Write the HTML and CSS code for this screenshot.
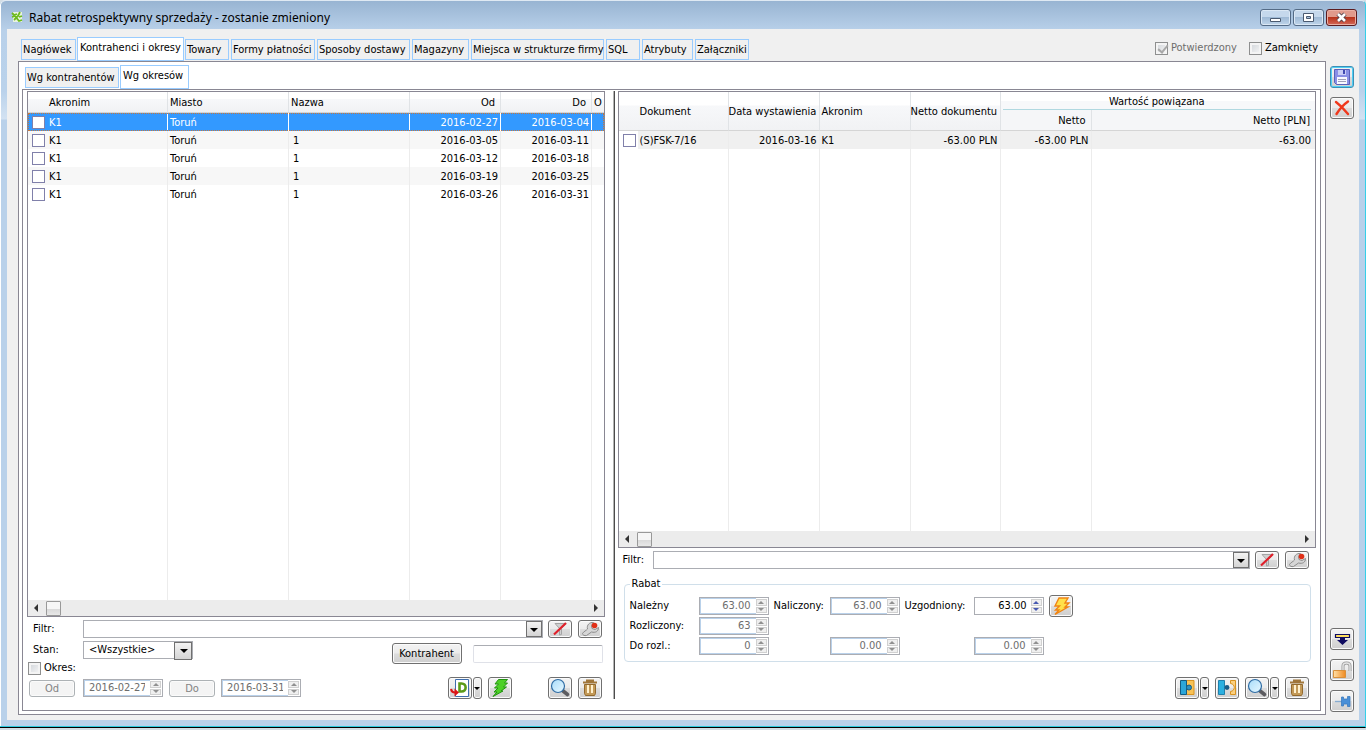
FILE: index.html
```
<!DOCTYPE html>
<html lang="pl">
<head>
<meta charset="utf-8">
<title>Rabat retrospektywny sprzedaży</title>
<link rel="stylesheet" href="styles.css">
</head>
<body>
<svg class="defs" aria-hidden="true">
  <defs>
    <linearGradient id="glass" x1="0" y1="0" x2="1" y2="1"><stop offset="0" stop-color="#a8dcfa"/><stop offset="1" stop-color="#e8f8ff"/></linearGradient>
    <linearGradient id="orange" x1="0" y1="0" x2="1" y2="0"><stop offset="0" stop-color="#ffe0a8"/><stop offset="1" stop-color="#f08a20"/></linearGradient>
    <symbol id="i-filter" viewBox="0 0 22 16"><path d="M6 2.500h11l-4.500 5v6l-2 .5V7.500z" fill="#d0d0d0" stroke="#a4a4a4"/><path d="M5 13.500L17 2" stroke="#e0202a" stroke-width="2.200"/></symbol>
    <symbol id="i-wrench" viewBox="0 0 22 16"><path d="M3.500 12.500c1-2 4-3 5-4.500-1-4 2-7 6-6.500l-2 3 .5 3 3 1 3.500-2c0 4-3 5.500-7 4.500l-5 3.500c-2 .5-4-.5-4-2z" fill="#d6d6d6" stroke="#8c8c8c"/><circle cx="15.500" cy="4.500" r="2.800" fill="#e03018"/></symbol>
    <symbol id="i-lens" viewBox="0 0 22 20"><path d="M13.500 12.500l5 4" stroke="#5c5c60" stroke-width="3.600" stroke-linecap="round"/><circle cx="9" cy="8" r="6.500" fill="url(#glass)" stroke="#2f6ca4" stroke-width="1.200"/></symbol>
    <symbol id="i-trash" viewBox="0 0 22 20"><path d="M5.500 6.500h11v9l-1 2h-9l-1-2z" fill="#c39a58" stroke="#93692c"/><path d="M4 4.500h14M7 2.500h8" stroke="#a0763a" stroke-width="2"/><path d="M9 7v8M13 7v8" stroke="#fff1cf" stroke-width="2"/></symbol>
    <symbol id="i-doc" viewBox="0 0 22 20"><path d="M6.500 1.500h13v17h-13z" fill="#fff" stroke="#3f6eae"/><path d="M10.500 5.500h2c5.500 0 5.500 8 0 8h-2z" fill="none" stroke="#5a9a18" stroke-width="2.600"/><path d="M2 11c.5 3 2 3.500 4 3.500" fill="none" stroke="#dc1414" stroke-width="2"/><path d="M5.500 10.500l4.500 4-4.500 4z" fill="#dc1414"/></symbol>
    <symbol id="i-green" viewBox="0 0 22 20"><path d="M9.500 1.500h9l-3 3.500h3l-4 4h3L12 13h2L4 18.500 8 14H5l4-4H5.500l4-4H6z" fill="#4cd026" stroke="#229310"/></symbol>
    <symbol id="i-bolt" viewBox="0 0 22 20"><path d="M9 2h9l-3 5h4l-4 4h3L5 18.500 9 14H5.500l4-4H5z" fill="#ffe04a" stroke="#f08414" stroke-width="1.400"/></symbol>
    <symbol id="i-joined" viewBox="0 0 22 20"><path d="M10 2.500h8v14h-8z" fill="#f8c255" stroke="#d89320"/><path d="M4.500 2.500h6v14h-6z" fill="#2ca6d8" stroke="#145c82"/><circle cx="13" cy="9.500" r="2.500" fill="#2c90c0" stroke="#145c82"/></symbol>
    <symbol id="i-apart" viewBox="0 0 22 20"><path d="M2.500 2.500h6v14h-6z" fill="#2cb0e0" stroke="#2080ac"/><circle cx="11" cy="9.500" r="2.400" fill="#185c88"/><path d="M14.500 2.500h5v14h-5v-3c5-.5 5-7.500 0-8z" fill="#fbd080" stroke="#d89320"/></symbol>
    <symbol id="i-save" viewBox="0 0 22 20"><path d="M3.500 2.500h15v15H5.500l-2-2z" fill="#8a8fe6" stroke="#5a60b8"/><path d="M7 3h8v5H7z" fill="#c8ccf6"/><path d="M12 3h2v4h-2z" fill="#4048b0"/><path d="M6 10h10v7H6z" fill="#f8f8ff"/><path d="M7 12.500h8M7 14.500h8" stroke="#a0a0b8"/></symbol>
    <symbol id="i-cross" viewBox="0 0 22 20"><path d="M5 4c4 3 8 7 12 12M17 3.500C12 7 8 12 5.500 16" fill="none" stroke="#f0381c" stroke-width="2.400" stroke-linecap="round"/></symbol>
    <symbol id="i-down" viewBox="0 0 22 20"><path d="M4.500 5.500h14v3h-14z" fill="#ffdf60" stroke="#100c60" stroke-width="1.200"/><path d="M9 8h5v3h3l-5.500 5L6 11h3z" fill="#100c60"/></symbol>
    <symbol id="i-lock" viewBox="0 0 22 20"><path d="M12 10V6c0-4 7-4 7 0v5" fill="none" stroke="#9a9a9a" stroke-width="3"/><path d="M12 10V6c0-4 7-4 7 0v5" fill="none" stroke="#e4e4e4" stroke-width="1.400"/><path d="M2.500 10.500h12v7h-12z" fill="url(#orange)" stroke="#d8903c"/></symbol>
    <symbol id="i-pin" viewBox="0 0 22 20"><path d="M4 10.500h7" stroke="#88acd0" stroke-width="1.400"/><path d="M10.500 6h2v2h4V5.500h2.500v10h-2.500V13h-4v2h-2z" fill="#4a90d8" stroke="#3c7cc0" stroke-width=".8"/></symbol>
  </defs>
</svg>
<div class="window">
  <header class="titlebar">
    <svg class="app-icon" viewBox="0 0 12 12"><path d="M2 1h9v10H2z" fill="#e8f2e0"/><path d="M1 2l2 2 3-1M4 5l4 5 3-1M9 1L7 5 3 9M1 6l3-1M8 6l3-1" stroke="#6cba1c" stroke-width="1.800" fill="none"/></svg>
    <h1>Rabat retrospektywny sprzedaży - zostanie zmieniony</h1>
    <div class="winctl">
      <button aria-label="Minimalizuj"><svg viewBox="0 0 29 15"><path d="M9.500 8.500h10v3h-10z" fill="#fff" stroke="#4a5a70"/></svg></button>
      <button aria-label="Przywróć"><svg viewBox="0 0 29 15"><path d="M9.500 3.500h10v8h-10z" fill="#fff" stroke="#4a5a70"/><path d="M12.500 6.500h4v2h-4z" fill="#a8c0dc" stroke="#4a5a70"/></svg></button>
      <button class="close" aria-label="Zamknij"><svg viewBox="0 0 29 15"><path d="M11 4l7 7M18 4l-7 7" stroke="#51404a" stroke-width="4.400"/><path d="M11 4l7 7M18 4l-7 7" stroke="#fff" stroke-width="2.600"/></svg></button>
    </div>
  </header>
  <div class="client">
    <main class="main">
      <div class="top">
        <nav class="tabs">
          <button class="t55">Nagłówek</button><button class="t107 active">Kontrahenci i okresy</button><button class="t44">Towary</button><button class="t84">Formy płatności</button><button class="t93">Sposoby dostawy</button><button class="t57">Magazyny</button><button class="t133">Miejsca w strukturze firmy</button><button class="t34">SQL</button><button class="t51">Atrybuty</button><button class="t54">Załączniki</button>
        </nav>
        <div class="flags">
          <label class="check off"><input type="checkbox" checked disabled>Potwierdzony</label>
          <label class="check"><input type="checkbox">Zamknięty</label>
        </div>
      </div>
      <div class="pane">
        <nav class="tabs sub"><button class="t94">Wg kontrahentów</button><button class="t69 active">Wg okresów</button></nav>
        <div class="split">
          <section class="left">
            <div class="grid">
              <table class="list periods">
                <colgroup><col class="c140"><col class="c121"><col class="c121"><col class="c91"><col class="c91"><col></colgroup>
                <thead><tr><th class="first">Akronim</th><th>Miasto</th><th>Nazwa</th><th class="r">Od</th><th class="r">Do</th><th>O</th></tr></thead>
                <tbody>
                  <tr class="selected"><td><label><input type="checkbox">K1</label></td><td>Toruń</td><td></td><td class="r">2016-02-27</td><td class="r">2016-03-04</td><td></td></tr>
                  <tr class="alt"><td><label><input type="checkbox">K1</label></td><td>Toruń</td><td>1</td><td class="r">2016-03-05</td><td class="r">2016-03-11</td><td></td></tr>
                  <tr><td><label><input type="checkbox">K1</label></td><td>Toruń</td><td>1</td><td class="r">2016-03-12</td><td class="r">2016-03-18</td><td></td></tr>
                  <tr class="alt"><td><label><input type="checkbox">K1</label></td><td>Toruń</td><td>1</td><td class="r">2016-03-19</td><td class="r">2016-03-25</td><td></td></tr>
                  <tr><td><label><input type="checkbox">K1</label></td><td>Toruń</td><td>1</td><td class="r">2016-03-26</td><td class="r">2016-03-31</td><td></td></tr>
                  <tr class="filler" aria-hidden="true"><td></td><td></td><td></td><td></td><td></td><td></td></tr>
                </tbody>
              </table>
              <div class="scroll"><i class="arrow l"></i><i class="thumb"></i><i class="arrow rt"></i></div>
            </div>
            <div class="filter">
              <label for="f1">Filtr:</label>
              <div class="combo"><input id="f1" type="text"><button aria-label="Rozwiń"></button></div>
              <button class="btn small" aria-label="Wyczyść filtr"><svg><use href="#i-filter"/></svg></button>
              <button class="btn small" aria-label="Konstruuj filtr"><svg><use href="#i-wrench"/></svg></button>
            </div>
            <div class="state">
              <div class="state-left">
                <div class="field"><label for="stan">Stan:</label><span class="select"><select id="stan"><option>&lt;Wszystkie&gt;</option></select></span></div>
                <label class="check"><input type="checkbox">Okres:</label>
              </div>
              <div class="party"><button class="btn text">Kontrahent</button><input type="text" aria-label="Kontrahent"></div>
            </div>
            <div class="actions">
              <div class="dates">
                <button class="btn flat" disabled>Od</button>
                <span class="spin date off"><input type="text" value="2016-02-27" aria-label="Data od" disabled><span class="ud"><button disabled aria-label="Więcej"></button><button disabled aria-label="Mniej"></button></span></span>
                <button class="btn flat" disabled>Do</button>
                <span class="spin date off"><input type="text" value="2016-03-31" aria-label="Data do" disabled><span class="ud"><button disabled aria-label="Więcej"></button><button disabled aria-label="Mniej"></button></span></span>
              </div>
              <div class="tools">
                <span class="duo"><button class="btn" aria-label="Dokument"><svg><use href="#i-doc"/></svg></button><button class="btn drop" aria-label="Opcje dokumentu"></button></span>
                <button class="btn" aria-label="Przelicz"><svg><use href="#i-green"/></svg></button>
                <button class="btn apart" aria-label="Podgląd"><svg><use href="#i-lens"/></svg></button>
                <button class="btn" aria-label="Usuń"><svg><use href="#i-trash"/></svg></button>
              </div>
            </div>
          </section>
          <div class="splitter"></div>
          <section class="right">
            <div class="grid">
              <table class="list docs">
                <colgroup><col class="c19"><col class="c91"><col class="c91"><col class="c91"><col class="c90"><col class="c91"><col></colgroup>
                <thead>
                  <tr><th rowspan="2" class="nb"></th><th rowspan="2">Dokument</th><th rowspan="2" class="tight">Data wystawienia</th><th rowspan="2">Akronim</th><th rowspan="2" class="tight">Netto dokumentu</th><th colspan="2" class="group"><span>Wartość powiązana</span></th></tr>
                  <tr><th class="r">Netto</th><th class="r">Netto [PLN]</th></tr>
                </thead>
                <tbody>
                  <tr class="current"><td class="nb mark"><input type="checkbox" aria-label="(S)FSK-7/16"></td><td>(S)FSK-7/16</td><td class="r">2016-03-16</td><td>K1</td><td class="r">-63.00 PLN</td><td class="r">-63.00 PLN</td><td class="r wide">-63.00</td></tr>
                  <tr class="filler" aria-hidden="true"><td class="nb"></td><td></td><td></td><td></td><td></td><td></td><td></td></tr>
                </tbody>
              </table>
              <div class="scroll"><i class="arrow l"></i><i class="thumb"></i><i class="arrow rt"></i></div>
            </div>
            <div class="filter">
              <label for="f2">Filtr:</label>
              <div class="combo"><input id="f2" type="text"><button aria-label="Rozwiń"></button></div>
              <button class="btn small" aria-label="Wyczyść filtr"><svg><use href="#i-filter"/></svg></button>
              <button class="btn small" aria-label="Konstruuj filtr"><svg><use href="#i-wrench"/></svg></button>
            </div>
            <fieldset class="rebate">
              <legend>Rabat</legend>
              <div class="sums">
                <label for="r1">Należny</label><span class="spin off"><input id="r1" value="63.00" disabled><span class="ud"><button disabled aria-label="Więcej"></button><button disabled aria-label="Mniej"></button></span></span>
                <label for="r2">Naliczony:</label><span class="spin off"><input id="r2" value="63.00" disabled><span class="ud"><button disabled aria-label="Więcej"></button><button disabled aria-label="Mniej"></button></span></span>
                <label for="r3">Uzgodniony:</label><span class="spin"><input id="r3" value="63.00"><span class="ud"><button aria-label="Więcej"></button><button aria-label="Mniej"></button></span></span>
                <button class="btn" aria-label="Rozlicz"><svg><use href="#i-bolt"/></svg></button>
                <label for="r4" class="start">Rozliczony:</label><span class="spin off"><input id="r4" value="63" disabled><span class="ud"><button disabled aria-label="Więcej"></button><button disabled aria-label="Mniej"></button></span></span>
                <label for="r5" class="start">Do rozl.:</label><span class="spin off"><input id="r5" value="0" disabled><span class="ud"><button disabled aria-label="Więcej"></button><button disabled aria-label="Mniej"></button></span></span>
                <span></span><span class="spin off"><input value="0.00" aria-label="Naliczony do rozliczenia" disabled><span class="ud"><button disabled aria-label="Więcej"></button><button disabled aria-label="Mniej"></button></span></span>
                <span></span><span class="spin off"><input value="0.00" aria-label="Uzgodniony do rozliczenia" disabled><span class="ud"><button disabled aria-label="Więcej"></button><button disabled aria-label="Mniej"></button></span></span>
              </div>
            </fieldset>
            <div class="tools">
              <span class="duo"><button class="btn" aria-label="Powiąż"><svg><use href="#i-joined"/></svg></button><button class="btn drop" aria-label="Opcje powiązania"></button></span>
              <button class="btn" aria-label="Rozłącz"><svg><use href="#i-apart"/></svg></button>
              <span class="duo"><button class="btn" aria-label="Podgląd"><svg><use href="#i-lens"/></svg></button><button class="btn drop" aria-label="Opcje podglądu"></button></span>
              <button class="btn" aria-label="Usuń"><svg><use href="#i-trash"/></svg></button>
            </div>
          </section>
        </div>
      </div>
    </main>
    <aside class="side">
      <button class="btn save" aria-label="Zapisz"><svg><use href="#i-save"/></svg></button>
      <button class="btn" aria-label="Anuluj"><svg><use href="#i-cross"/></svg></button>
      <button class="btn bottom" aria-label="Przenieś w dół"><svg><use href="#i-down"/></svg></button>
      <button class="btn" aria-label="Odblokuj"><svg><use href="#i-lock"/></svg></button>
      <button class="btn" aria-label="Przypnij"><svg><use href="#i-pin"/></svg></button>
    </aside>
  </div>
</div>
</body>
</html>
```
FILE: styles.css
```
* { box-sizing: border-box; }
html, body { height: 100%; }
body, button, input, select {
  font-family: "DejaVu Sans Condensed", "Noto Sans", sans-serif;
  font-size: 11px;
  line-height: 14px;
  color: #000;
}
body { margin: 0; padding-bottom: 2px; background: #d4dde4; overflow: hidden; }
button, input, select { margin: 0; padding: 0; border-radius: 0; }
svg { display: block; }
.defs { position: absolute; width: 0; height: 0; }

.window {
  height: 100%;
  display: flex;
  flex-direction: column;
  padding: 0 6px 7px 7px;
  background: linear-gradient(#98b4d2, #b9d1ea 30px, #bad2eb 90px, #d3e2f2 118px, #b9d1ea 119px);
  border-top: 1px solid #dfe9f3;
  border-right: 1px solid #35cfe8;
  border-bottom: 1px solid #000;
  box-shadow: inset 0 -1px #2bc9dc, inset 1px 0 #fff;
  border-radius: 5px 5px 0 0;
}
.titlebar { flex: none; height: 28px; display: flex; align-items: center; padding: 3px 2px 0 4px; }
.app-icon { width: 12px; height: 12px; margin-right: 6px; }
.titlebar h1 { flex: 1; margin: 0; padding-top: 2px; font: 12px/16px "Noto Sans", sans-serif; }
.winctl { display: flex; gap: 2px; margin-top: 1px; }
.winctl button {
  width: 31px; height: 17px; border: 1px solid #546b86; border-radius: 3px;
  background: linear-gradient(#c5d8ec 45%, #9fbad6 50%, #bfd5ea);
  box-shadow: inset 0 0 0 1px #dbe8f5;
}
.winctl svg { width: 29px; height: 15px; }
.winctl .close { background: linear-gradient(#e09a8c 45%, #b8341c 50%, #d4695a); border-color: #5c1c20; box-shadow: inset 0 0 0 1px #eab0a4; }

.client { flex: 1; min-height: 0; display: flex; background: #f0f0f0; }
.main { flex: 1; min-width: 0; display: flex; flex-direction: column; padding: 0 0 5px 11px; }
.top { flex: none; height: 32px; display: flex; justify-content: space-between; align-items: flex-end; padding-left: 3px; }
.tabs { display: flex; align-items: flex-end; gap: 2px; }
.tabs button {
  height: 21px; margin-bottom: 1px; padding: 0 0 0 1px; text-align: left; white-space: nowrap;
  border: 1px solid #99ccff; background: #f0f0f0;
}
.tabs .active { height: 24px; margin: 0 -1px; padding: 0 0 3px 2px; background: #fff; }
.t34 { width: 34px; } .t44 { width: 44px; } .t51 { width: 51px; } .t54 { width: 54px; } .t55 { width: 55px; }
.t57 { width: 57px; } .t69 { width: 69px; } .t84 { width: 84px; } .t93 { width: 93px; }
.t94 { width: 94px; } .t107 { width: 107px; } .t133 { width: 133px; }
.flags { display: flex; gap: 12px; padding: 0 8px 6px 0; }

input[type="checkbox"] { appearance: none; flex: none; width: 13px; height: 13px; border: 1px solid #8080aa; background: #fff; }
.check { display: flex; align-items: center; gap: 3px; }
.check input[type="checkbox"] { border-color: #8e8f8f; background: linear-gradient(135deg, #cfd3d8, #f8f8f8); box-shadow: inset 0 0 0 2px #f4f4f4; }
.check input:checked::after { content: ""; display: block; width: 4px; height: 8px; margin: 0 0 0 4px; border: solid #a8a8a8; border-width: 0 2px 2px 0; transform: rotate(40deg); }
.off { color: #6d6d6d; }

.pane {
  flex: 1; min-height: 0; display: flex; flex-direction: column;
  padding: 3px 4px 3px 3px; border: 1px solid #898793; background: #fff;
}
.sub { padding-left: 3px; height: 24px; }
.split {
  flex: 1; min-height: 0; display: grid; grid-template-columns: minmax(0, 586fr) 2px minmax(0, 702fr);
  padding: 1px 4px 11px; border: 1px solid #898793;
}
.splitter { background: linear-gradient(90deg, #b4b4b4 50%, #4c4c4c 50%); }
.left, .right { min-width: 0; display: flex; flex-direction: column; }
.left { margin-right: 8px; }
.right { margin-left: 3px; }

.grid { flex: 1; min-height: 0; display: flex; flex-direction: column; border: 1px solid #898793; overflow: hidden; }
.list { flex: 1; width: 100%; height: 100px; border-collapse: separate; border-spacing: 0; table-layout: fixed; }
.c19 { width: 19px; } .c90 { width: 90px; } .c91 { width: 91px; } .c121 { width: 121px; } .c140 { width: 140px; }
.list th, .list td { height: 18px; padding: 2px 2px 0; text-align: left; font-weight: normal; white-space: nowrap; overflow: hidden; border-right: 1px solid #ececec; }
.list th {
  height: 21px; border-right-color: #e0e3e6; border-bottom: 1px solid #d5d5d5;
  background: linear-gradient(#fff 35%, #f7f8fa 36%, #f1f2f4);
}
.list th:last-child, .list td:last-child { border-right: 0; }
.list .first { padding-left: 21px; }
.list .r { text-align: right; }
.list th.r { padding-right: 5px; }
.list td:first-child label { display: flex; align-items: flex-start; gap: 4px; padding-left: 2px; }
.list .nb { border-right: 0; }
.alt td { background: #f7f7f7; }
.periods td:nth-child(3) { padding-left: 4px; }
.selected td { background: #3399ff; color: #fff; border-right-color: #fff; }
.selected { outline: 1px dotted #c8783c; outline-offset: -1px; }
.filler td { height: auto; }
.docs thead tr:first-child th { height: 18px; }
.docs thead tr:nth-child(2) th { height: 21px; background: #f5f6f8; }
.docs .tight { padding-left: 0; }
.docs .group { padding: 0 4px 0 2px; text-align: center; border-bottom: 0; background: linear-gradient(#fff 50%, #f7f8fa 51%); }
.docs .group span { display: block; height: 18px; line-height: 19px; border-bottom: 1px solid #b0d8e0; }
.current td { background: #f0f0f0; }
.list .wide { padding-right: 4px; }
.list .mark { background: #fff; padding: 1px 0 0 4px; }
.mark input { display: block; }

.scroll { flex: none; height: 16px; display: flex; align-items: center; padding: 0 6px; background: #ececec; }
.arrow { border: 4px solid transparent; border-width: 4px 0; }
.arrow.l { border-right: 4px solid #333; }
.arrow.rt { margin-left: auto; border-left: 4px solid #333; }
.thumb { width: 15px; height: 15px; margin-left: 8px; border: 1px solid #999; border-radius: 1px; background: linear-gradient(#f6f6f6 50%, #d8d8d8 51%, #e8e8e8); }

.btn {
  flex: none; width: 24px; height: 22px; border: 1px solid #707070; border-radius: 3px;
  background: linear-gradient(#f3f3f3, #ebebeb 48%, #dcdcdc 52%, #cfcfcf); box-shadow: inset 0 0 0 1px #fbfbfb;
}
.btn svg { width: 22px; height: 20px; }
.btn.small { height: 18px; }
.btn.small svg { height: 16px; }
.btn.text { width: 70px; height: 21px; }
.btn.flat { width: 46px; height: 17px; margin-top: 1px; border-color: #adb2b5; background: #f4f4f4; color: #838383; }
.btn.drop { width: 9px; display: grid; place-items: center; }
.btn.drop::after, .combo button::after { content: ""; border: solid transparent; border-width: 4px 4px 0; border-top-color: #000; }
.btn.drop::after { border-width: 3px 3px 0; }

.filter { flex: none; display: flex; align-items: center; gap: 6px; margin-top: 3px; padding: 0 3px 0 6px; }
.filter label { width: 44px; }
.combo { flex: 1; display: flex; height: 18px; margin-right: -1px; border: 1px solid #abadb3; }
.combo input { flex: 1; min-width: 0; padding: 0 4px; border: 0; background: #fff; }
.combo button { width: 16px; border: 1px solid #707070; background: linear-gradient(#f3f3f3, #d4d4d4); display: grid; place-items: center; padding-top: 2px; }
.right .filter { padding: 0 7px 0 5px; }
.right .filter label { width: 24px; }
.state { display: flex; justify-content: space-between; align-items: flex-start; padding: 3px 2px 0 1px; }
.state-left { display: flex; flex-direction: column; gap: 2px; }
.field { display: flex; align-items: center; padding-left: 5px; }
.field label { width: 50px; }
.select { display: flex; position: relative; width: 110px; height: 18px; border: 1px solid #abadb3; }
.select select { appearance: none; flex: 1; padding: 0 20px 0 5px; border: 0; background: #fff; }
.select::before { content: ""; position: absolute; right: 0; top: 0; width: 16px; height: 16px; border: 1px solid #707070; background: linear-gradient(#f3f3f3, #d4d4d4); pointer-events: none; }
.select::after { content: ""; position: absolute; right: 4px; top: 7px; border: solid transparent; border-width: 4px 4px 0; border-top-color: #000; pointer-events: none; }
.party { display: flex; align-items: center; gap: 11px; padding-top: 2px; }
.party input { width: 130px; height: 18px; border: 1px solid #dfe1e8; border-top-color: #abadb3; border-radius: 2px; }
.actions { display: flex; justify-content: space-between; align-items: center; margin-top: 2px; padding: 0 3px 0 2px; }
.dates { display: flex; align-items: center; gap: 6px; }
.dates .flat:first-child { margin-right: 2px; }
.tools { flex: none; display: flex; gap: 6px; justify-content: flex-end; }
.duo { display: flex; gap: 1px; }
.tools .apart { margin-left: 30px; }
.right .tools { margin-top: 15px; padding-right: 7px; }

.spin { display: flex; width: 70px; height: 18px; border: 1px solid #abadb3; background: #fff; }
.spin.date { width: 80px; }
.spin input { flex: 1; min-width: 0; padding: 0 4px; border: 0; background: #fff; text-align: right; }
.spin.off input { color: #6d6d6d; border: 1px solid #b9d1ea; border-right: 0; padding-right: 5px; }
.ud { width: 12px; display: grid; grid-template-rows: 1fr 1fr; gap: 1px; padding: 1px 1px 1px 0; }
.ud button { display: grid; place-items: center; border: 1px solid #d0d0d0; background: #efefef; }
.ud button::after { content: ""; border: solid transparent; border-width: 0 3px 3px; border-bottom-color: #4658b0; }
.ud button + button::after { border-width: 3px 3px 0; border-top-color: #4658b0; }
.off .ud button::after { border-bottom-color: #909090; border-top-color: #909090; }

.rebate { flex: none; margin: 8px 5px 0 6px; padding: 0 5px 5px; border: 1px solid #d0dfea; border-radius: 4px; }
.rebate legend { padding: 0 2px; }
.sums { display: grid; grid-template-columns: 69px 75px 56px 75px 69px 75px 24px; grid-auto-rows: 20px; align-items: center; margin-top: 5px; }
.sums .start { grid-column-start: 1; }

.side { flex: none; width: 33px; display: flex; flex-direction: column; align-items: flex-start; gap: 9px; padding: 37px 0 8px 4px; }
.side .bottom { margin-top: auto; }
.side .save { border-color: #3c8fb5; box-shadow: inset 0 0 0 1px #4ed0f6; }
```
